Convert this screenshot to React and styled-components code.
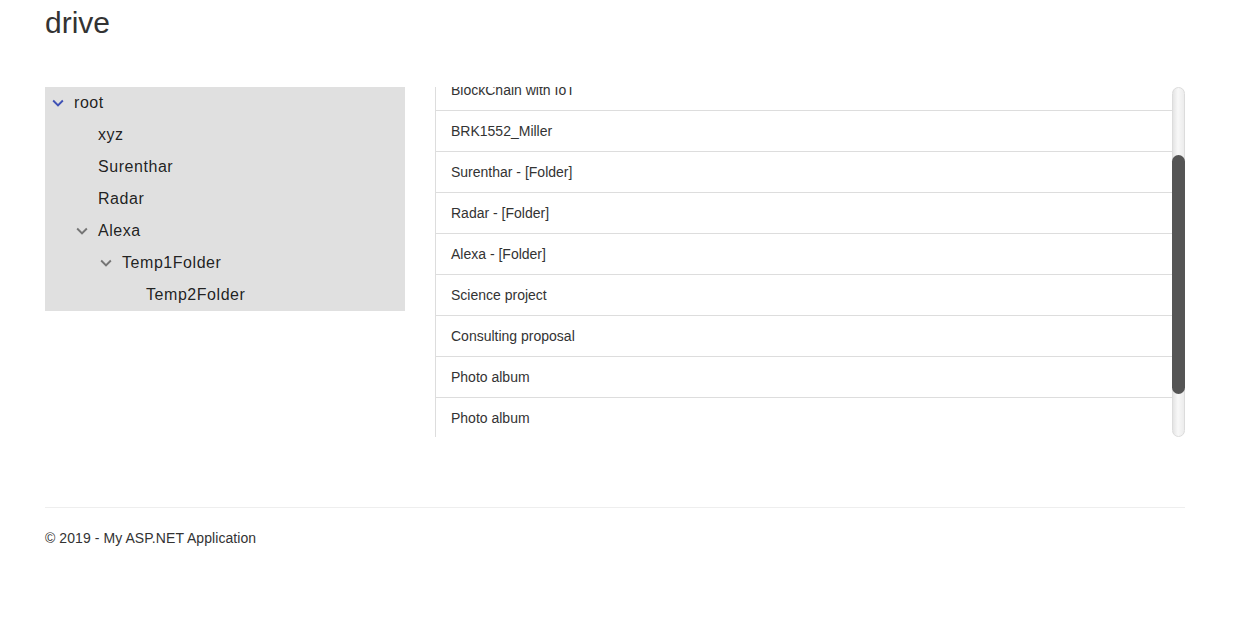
import React, { useEffect, useRef, useState } from 'react';
import styled, { createGlobalStyle } from 'styled-components';

const GlobalStyle = createGlobalStyle`
  html, body {
    margin: 0;
    padding: 0;
    background: #fff;
  }
  body {
    font-family: "Liberation Sans", Arial, sans-serif;
    font-size: 14px;
    line-height: 20px;
    color: #333;
  }
`;

const PageStyle = styled.div`
  width: 1140px;
  margin-left: 45px;
  padding-top: 6px;
`;

const TitleStyle = styled.h2`
  margin: 0;
  font-size: 30px;
  line-height: 33px;
  font-weight: 400;
  color: #333;
`;

const ContentStyle = styled.div`
  display: grid;
  grid-template-columns: 360px 1fr;
  column-gap: 30px;
  align-items: start;
  margin-top: 48px;
`;

const TreeStyle = styled.ul`
  list-style: none;
  margin: 0;
  padding: 0;
  background: #e0e0e0;
`;

const TreeRowStyle = styled.li`
  display: flex;
  align-items: center;
  height: 32px;
  padding-left: ${props => 2 + props.depth * 24}px;
  font-size: 16px;
  letter-spacing: 0.55px;
  color: rgba(0, 0, 0, 0.87);
`;

const ChevronBoxStyle = styled.span`
  display: flex;
  align-items: center;
  justify-content: center;
  width: 22px;
  height: 22px;
  margin-right: 5px;
  color: ${props => (props.active ? '#3f51b5' : '#757575')};
`;

const ListFrameStyle = styled.div`
  display: flex;
  height: 350px;
  border-left: 1px solid #ddd;
`;

const ListViewportStyle = styled.div`
  flex: 1;
  overflow-y: scroll;
  scrollbar-width: none;

  &::-webkit-scrollbar {
    display: none;
  }
`;

const ListInnerStyle = styled.ul`
  list-style: none;
  margin: 0 0 20px;
  padding: 0;
`;

const ListItemStyle = styled.li`
  padding: 10px 15px;
  line-height: 20px;
  font-size: 14px;
  color: #333;
  border-bottom: 1px solid #ddd;
`;

const ScrollTrackStyle = styled.div`
  position: relative;
  width: 13px;
  box-sizing: border-box;
  border: 1px solid #dcdcdc;
  border-radius: 7px;
  background: linear-gradient(to right, #e4e4e4, #f8f8f8 45%, #ececec);
`;

const ScrollThumbStyle = styled.div`
  position: absolute;
  left: -1px;
  right: -1px;
  background: #555;
  border-radius: 7px;
`;

const FooterStyle = styled.footer`
  margin-top: 70px;
  border-top: 1px solid #eee;
  padding-top: 20px;
  color: #333;
  letter-spacing: 0.07px;
`;

const treeNodes = [
  { label: 'root', depth: 0, open: true, active: true },
  { label: 'xyz', depth: 1 },
  { label: 'Surenthar', depth: 1 },
  { label: 'Radar', depth: 1 },
  { label: 'Alexa', depth: 1, open: true },
  { label: 'Temp1Folder', depth: 2, open: true },
  { label: 'Temp2Folder', depth: 3 },
];

const files = [
  'Temp1Folder - [Folder]',
  'xyz - [Folder]',
  'BlockChain with IoT',
  'BRK1552_Miller',
  'Surenthar - [Folder]',
  'Radar - [Folder]',
  'Alexa - [Folder]',
  'Science project',
  'Consulting proposal',
  'Photo album',
  'Photo album',
  'Temp2Folder - [Folder]',
];

function Chevron() {
  return (
    <svg width="22" height="22" viewBox="0 0 24 24" fill="currentColor">
      <path d="M16.59 8.59L12 13.17 7.41 8.59 6 10l6 6 6-6z" />
    </svg>
  );
}

function App() {
  const listRef = useRef(null);
  const [thumb, setThumb] = useState({ top: 68, height: 238 });

  useEffect(() => {
    const el = listRef.current;
    if (!el) return;
    el.scrollTop = 99;
    const ratio = el.clientHeight / el.scrollHeight;
    setThumb({
      top: el.scrollTop * ratio - 1,
      height: el.clientHeight * ratio,
    });
  }, []);

  return (
    <PageStyle>
      <GlobalStyle />
      <TitleStyle>drive</TitleStyle>
      <ContentStyle>
        <TreeStyle>
          {treeNodes.map(node => (
            <TreeRowStyle key={node.label} depth={node.depth}>
              <ChevronBoxStyle active={node.active}>
                {node.open && <Chevron />}
              </ChevronBoxStyle>
              {node.label}
            </TreeRowStyle>
          ))}
        </TreeStyle>
        <ListFrameStyle>
          <ListViewportStyle ref={listRef}>
            <ListInnerStyle>
              {files.map((name, i) => (
                <ListItemStyle key={i}>{name}</ListItemStyle>
              ))}
            </ListInnerStyle>
          </ListViewportStyle>
          <ScrollTrackStyle>
            <ScrollThumbStyle style={{ top: thumb.top, height: thumb.height }} />
          </ScrollTrackStyle>
        </ListFrameStyle>
      </ContentStyle>
      <FooterStyle>&copy; 2019 - My ASP.NET Application</FooterStyle>
    </PageStyle>
  );
}

export default App;
